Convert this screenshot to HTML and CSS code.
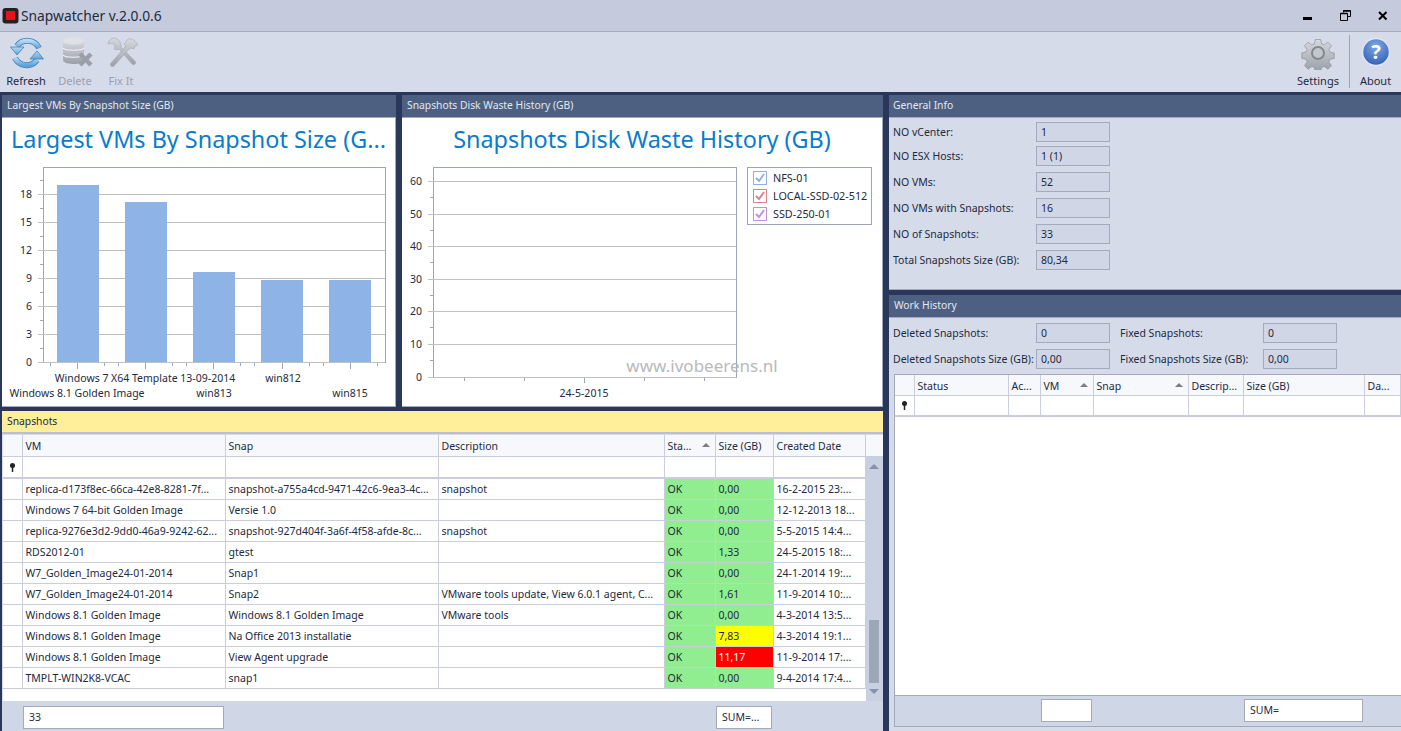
FILE: index.html
```html
<!DOCTYPE html>
<html lang="en">
<head>
    <meta charset="UTF-8">
    <title>Snapwatcher v.2.0.0.6</title>
    <link rel="stylesheet" href="styles.css">
</head>
<body>
    <svg width="0" height="0" class="defs">
        <defs>
            <linearGradient id="blueArrow" x1="0" y1="0" x2="0" y2="1">
                <stop offset="0" stop-color="#b5daf4"/>
                <stop offset="1" stop-color="#5fa3dc"/>
            </linearGradient>
            <linearGradient id="grayMetal" x1="0" y1="0" x2="0" y2="1">
                <stop offset="0" stop-color="#d6d9de"/>
                <stop offset="1" stop-color="#9a9fa8"/>
            </linearGradient>
            <radialGradient id="blueBall" cx="0.5" cy="0.3" r="0.75">
                <stop offset="0" stop-color="#7fa8e4"/>
                <stop offset="1" stop-color="#2c5cb2"/>
            </radialGradient>
        </defs>
    </svg>

    <header class="titlebar">
        <svg class="app-icon" width="18" height="18" viewBox="0 0 18 18">
            <rect x="0.5" y="1" width="16" height="15.5" rx="3" fill="#222"/>
            <rect x="4" y="4" width="9" height="9" fill="#e8101c"/>
        </svg>
        <span class="app-title">Snapwatcher v.2.0.0.6</span>
        <div class="window-buttons">
            <svg width="10" height="10" viewBox="0 0 10 10"><rect x="0" y="6" width="9" height="3" fill="#000"/></svg>
            <svg width="11" height="11" viewBox="0 0 11 11"><path d="M3.5 2.5V.5h7v6H8M.5 3.5h7v7h-7z" fill="none" stroke="#000"/><path d="M.5 3.5h7M3.5 1h7" stroke="#000" stroke-width="1.5"/></svg>
            <svg width="10" height="10" viewBox="0 0 10 10"><path d="M1 1l7.5 7.5M8.5 1L1 8.5" stroke="#000" stroke-width="2"/></svg>
        </div>
    </header>

    <div class="toolbar">
        <div class="tool tool-refresh">
            <svg width="34" height="34" viewBox="0 0 34 34">
                <path d="M29 12A13 13 0 0 0 7 10" fill="none" stroke="#3f7fb8" stroke-width="6"/>
                <path d="M5 22A13 13 0 0 0 27 24" fill="none" stroke="#3f7fb8" stroke-width="6"/>
                <path d="M29 12A13 13 0 0 0 7 10" fill="none" stroke="url(#blueArrow)" stroke-width="4.400"/>
                <path d="M5 22A13 13 0 0 0 27 24" fill="none" stroke="url(#blueArrow)" stroke-width="4.400"/>
                <path d="M.5 11H14L7 19z" fill="url(#blueArrow)" stroke="#3f7fb8" stroke-width=".8"/>
                <path d="M20 23h13.500L27 15z" fill="url(#blueArrow)" stroke="#3f7fb8" stroke-width=".8"/>
            </svg>
            <span>Refresh</span>
        </div>
        <div class="tool tool-delete disabled">
            <svg width="34" height="34" viewBox="0 0 34 34">
                <path d="M2 5v19c0 3 7 4 11 4s10-1 10-4V5z" fill="url(#grayMetal)"/>
                <ellipse cx="12.500" cy="5" rx="10.500" ry="3.500" fill="#dfe1e5"/>
                <path d="M2 12c2 3 19 3 21 0M2 19c2 3 19 3 21 0" fill="none" stroke="#f2f3f5" stroke-width="1.200"/>
                <path d="M19 18l11 11M30 18L19 29" stroke="#9aa0a8" stroke-width="4.500"/>
            </svg>
            <span>Delete</span>
        </div>
        <div class="tool tool-fix disabled">
            <svg width="34" height="34" viewBox="0 0 34 34">
                <path d="M8 2c-3 0-6 3-6 6l5-1 2 3-1 3c2 1 4 1 5 0l13 15c2 2 5-1 3-3L15 11c1-4-3-9-7-9z" fill="url(#grayMetal)" stroke="#a5a9b0" stroke-width=".6"/>
                <path d="M5 27L20 10l-2-2 4-5c4-1 8 2 10 6l-3 1-1 3-3-1-2 1L8 30c-2 2-5-1-3-3z" fill="url(#grayMetal)" stroke="#a5a9b0" stroke-width=".6"/>
            </svg>
            <span>Fix It</span>
        </div>
        <div class="tool tool-settings">
            <svg width="34" height="34" viewBox="0 0 34 34">
                <path d="M14 2h6l1 5 3 1 4-3 4 4-3 4 1.500 3 4.500 1v6l-4.500 1-1.500 3 3 4-4 4-4-3-3 1-1 4.500h-6l-1-4.500-3-1-4 3-4-4 3-4-1.500-3-4.500-1v-6l4.500-1 1.500-3-3-4 4-4 4 3 3-1z" transform="translate(1.700 1.700) scale(.9)" fill="url(#grayMetal)" stroke="#8e939c" stroke-width=".8"/>
                <circle cx="17" cy="17" r="6" fill="#c3c6cc" stroke="#83888f" stroke-width="2"/>
            </svg>
            <span>Settings</span>
        </div>
        <div class="tool tool-about">
            <svg width="30" height="30" viewBox="0 0 30 30">
                <circle cx="15" cy="15" r="13.500" fill="url(#blueBall)" stroke="#dfe6f4" stroke-width="1.500"/>
                <text x="15" y="21.500" text-anchor="middle" class="help-mark">?</text>
            </svg>
            <span>About</span>
        </div>
    </div>

    <main class="main">
        <div class="left">
            <section class="panel chart-panel">
                <h3 class="panel-head">Largest VMs By Snapshot Size (GB)</h3>
                <div class="chart-body">
                    <div class="chart-title">Largest VMs By Snapshot Size (G...</div>
                    <svg class="chart" width="392" height="244" viewBox="2 162 392 244">
                        <rect x="43.500" y="167.500" width="342" height="195" class="frame"/>
                        <path class="grid-line" d="M38 194.500H385M38 222.500H385M38 250.500H385M38 278.500H385M38 306.500H385M38 334.500H385M38 362.500H385"/>
                        <path class="tick" d="M40 180.500h3M40 208.500h3M40 236.500h3M40 264.500h3M40 292.500h3M40 320.500h3M40 348.500h3"/>
                        <path class="tick" d="M50.500 363v3M77.500 363v6M104.500 363v3M118.500 363v3M145.500 363v6M172.500 363v3M186.500 363v3M213.500 363v6M240.500 363v3M254.500 363v3M282.500 363v6M309.500 363v3M323.500 363v3M350.500 363v6M377.500 363v3"/>
                        <rect x="57" y="185" width="42" height="177" class="bar"/>
                        <rect x="125" y="202" width="42" height="160" class="bar"/>
                        <rect x="193" y="272" width="42" height="90" class="bar"/>
                        <rect x="261" y="280" width="42" height="82" class="bar"/>
                        <rect x="329" y="280" width="42" height="82" class="bar"/>
                        <g class="axis-y">
                            <text x="32" y="198">18</text>
                            <text x="32" y="226">15</text>
                            <text x="32" y="254">12</text>
                            <text x="32" y="282">9</text>
                            <text x="32" y="310">6</text>
                            <text x="32" y="338">3</text>
                            <text x="32" y="366">0</text>
                        </g>
                        <g class="axis-x">
                            <text x="145" y="382">Windows 7 X64 Template 13-09-2014</text>
                            <text x="283" y="382">win812</text>
                            <text x="77" y="397">Windows 8.1 Golden Image</text>
                            <text x="214" y="397">win813</text>
                            <text x="350" y="397">win815</text>
                        </g>
                    </svg>
                </div>
            </section>

            <section class="panel chart-panel">
                <h3 class="panel-head">Snapshots Disk Waste History (GB)</h3>
                <div class="chart-body">
                    <div class="chart-title">Snapshots Disk Waste History (GB)</div>
                    <svg class="chart" width="479" height="244" viewBox="402 162 479 244">
                        <rect x="433.500" y="167.500" width="303" height="210" class="frame"/>
                        <path class="grid-line" d="M428 181.500H736M428 214.500H736M428 246.500H736M428 279.500H736M428 311.500H736M428 344.500H736M428 377.500H736"/>
                        <path class="tick" d="M430 197.500h3M430 230.500h3M430 262.500h3M430 295.500h3M430 327.500h3M430 360.500h3"/>
                        <path class="tick" d="M464.500 378v3M524.500 378v3M584.500 378v5M644.500 378v3M704.500 378v3"/>
                        <g class="axis-y">
                            <text x="422" y="185">60</text>
                            <text x="422" y="218">50</text>
                            <text x="422" y="250">40</text>
                            <text x="422" y="283">30</text>
                            <text x="422" y="315">20</text>
                            <text x="422" y="348">10</text>
                            <text x="422" y="381">0</text>
                        </g>
                        <g class="axis-x">
                            <text x="584" y="397">24-5-2015</text>
                        </g>
                        <text x="702" y="372" class="watermark">www.ivobeerens.nl</text>
                        <rect x="747.500" y="167.500" width="124" height="57" class="legend-box"/>
                        <rect x="753.500" y="171.500" width="13" height="13" class="check" stroke="#8fb2e6"/>
                        <path d="M756 178l3 3 5-7" class="check-mark" stroke="#8fb2e6"/>
                        <text x="773" y="182" class="legend-text">NFS-01</text>
                        <rect x="753.500" y="189.500" width="13" height="13" class="check" stroke="#e0828c"/>
                        <path d="M756 196l3 3 5-7" class="check-mark" stroke="#e0828c"/>
                        <text x="773" y="200" class="legend-text">LOCAL-SSD-02-512</text>
                        <rect x="753.500" y="207.500" width="13" height="13" class="check" stroke="#c490d8"/>
                        <path d="M756 214l3 3 5-7" class="check-mark" stroke="#c490d8"/>
                        <text x="773" y="218" class="legend-text">SSD-250-01</text>
                    </svg>
                </div>
            </section>

            <section class="panel snapshots">
                <h3 class="panel-head yellow">Snapshots</h3>
                <div class="grid-wrap">
                    <table class="data-grid snap-grid">
                        <colgroup>
                            <col class="c-ind"><col class="c-vm"><col class="c-snap"><col class="c-desc">
                            <col class="c-status"><col class="c-size"><col class="c-date">
                        </colgroup>
                        <thead>
                            <tr>
                                <th></th><th>VM</th><th>Snap</th><th>Description</th>
                                <th class="sorted">Sta...</th><th>Size (GB)</th><th>Created Date</th>
                            </tr>
                            <tr class="filter-row">
                                <td class="pin"><svg width="7" height="9" viewBox="0 0 7 9"><path d="M3.500 4V9" stroke="#222" stroke-width="1.500"/><circle cx="3.500" cy="2.500" r="2.500" fill="#222"/></svg></td><td></td><td></td><td></td><td></td><td></td><td></td>
                            </tr>
                        </thead>
                        <tbody>
                            <tr><td class="ind"></td><td>replica-d173f8ec-66ca-42e8-8281-7f...</td><td>snapshot-a755a4cd-9471-42c6-9ea3-4c...</td><td>snapshot</td><td class="ok">OK</td><td class="ok">0,00</td><td>16-2-2015 23:...</td></tr>
                            <tr><td class="ind"></td><td>Windows 7 64-bit Golden Image</td><td>Versie 1.0</td><td></td><td class="ok">OK</td><td class="ok">0,00</td><td>12-12-2013 18...</td></tr>
                            <tr><td class="ind"></td><td>replica-9276e3d2-9dd0-46a9-9242-62...</td><td>snapshot-927d404f-3a6f-4f58-afde-8c...</td><td>snapshot</td><td class="ok">OK</td><td class="ok">0,00</td><td>5-5-2015 14:4...</td></tr>
                            <tr><td class="ind"></td><td>RDS2012-01</td><td>gtest</td><td></td><td class="ok">OK</td><td class="ok">1,33</td><td>24-5-2015 18:...</td></tr>
                            <tr><td class="ind"></td><td>W7_Golden_Image24-01-2014</td><td>Snap1</td><td></td><td class="ok">OK</td><td class="ok">0,00</td><td>24-1-2014 19:...</td></tr>
                            <tr><td class="ind"></td><td>W7_Golden_Image24-01-2014</td><td>Snap2</td><td>VMware tools update, View 6.0.1 agent, C...</td><td class="ok">OK</td><td class="ok">1,61</td><td>11-9-2014 10:...</td></tr>
                            <tr><td class="ind"></td><td>Windows 8.1 Golden Image</td><td>Windows 8.1 Golden Image</td><td>VMware tools</td><td class="ok">OK</td><td class="ok">0,00</td><td>4-3-2014 13:5...</td></tr>
                            <tr><td class="ind"></td><td>Windows 8.1 Golden Image</td><td>Na Office 2013 installatie</td><td></td><td class="ok">OK</td><td class="warn">7,83</td><td>4-3-2014 19:1...</td></tr>
                            <tr><td class="ind"></td><td>Windows 8.1 Golden Image</td><td>View Agent upgrade</td><td></td><td class="ok">OK</td><td class="bad">11,17</td><td>11-9-2014 17:...</td></tr>
                            <tr><td class="ind"></td><td>TMPLT-WIN2K8-VCAC</td><td>snap1</td><td></td><td class="ok">OK</td><td class="ok">0,00</td><td>9-4-2014 17:4...</td></tr>
                        </tbody>
                    </table>
                    <div class="scroll-col">
                        <div class="scroll-head"></div>
                        <div class="scrollbar">
                            <span class="arrow-up"></span>
                            <span class="scroll-space"></span>
                            <span class="thumb"></span>
                            <span class="arrow-down"></span>
                        </div>
                    </div>
                </div>
                <div class="grid-foot snap-foot">
                    <div class="foot-box foot-count">33</div>
                    <div class="foot-box foot-sum">SUM=...</div>
                </div>
            </section>
        </div>

        <div class="right">
            <section class="panel general">
                <h3 class="panel-head">General Info</h3>
                <div class="info-body">
                    <div class="info-row"><label>NO vCenter:</label><div class="value">1</div></div>
                    <div class="info-row"><label>NO ESX Hosts:</label><div class="value">1 (1)</div></div>
                    <div class="info-row"><label>NO VMs:</label><div class="value">52</div></div>
                    <div class="info-row"><label>NO VMs with Snapshots:</label><div class="value">16</div></div>
                    <div class="info-row"><label>NO of Snapshots:</label><div class="value">33</div></div>
                    <div class="info-row"><label>Total Snapshots Size (GB):</label><div class="value">80,34</div></div>
                </div>
            </section>

            <section class="panel history">
                <h3 class="panel-head">Work History</h3>
                <div class="info-body two-col">
                    <div class="info-row"><label>Deleted Snapshots:</label><div class="value">0</div><label>Fixed Snapshots:</label><div class="value">0</div></div>
                    <div class="info-row"><label>Deleted Snapshots Size (GB):</label><div class="value">0,00</div><label>Fixed Snapshots Size (GB):</label><div class="value">0,00</div></div>
                </div>
                <div class="history-grid">
                    <table class="data-grid work-grid">
                        <colgroup>
                            <col class="w-ind"><col class="w-status"><col class="w-ac"><col class="w-vm">
                            <col class="w-snap"><col class="w-desc"><col class="w-size"><col class="w-da">
                        </colgroup>
                        <thead>
                            <tr>
                                <th></th><th>Status</th><th>Ac...</th><th class="sorted">VM</th>
                                <th class="sorted">Snap</th><th>Descrip...</th><th>Size (GB)</th><th>Da...</th>
                            </tr>
                            <tr class="filter-row">
                                <td class="pin"><svg width="7" height="9" viewBox="0 0 7 9"><path d="M3.500 4V9" stroke="#222" stroke-width="1.500"/><circle cx="3.500" cy="2.500" r="2.500" fill="#222"/></svg></td><td></td><td></td><td></td><td></td><td></td><td></td><td></td>
                            </tr>
                        </thead>
                    </table>
                    <div class="grid-foot work-foot">
                        <div class="foot-box foot-empty"></div>
                        <div class="foot-box foot-wsum">SUM=</div>
                    </div>
                </div>
            </section>
        </div>
    </main>
</body>
</html>
```

FILE: styles.css
```css
* {
    box-sizing: border-box;
}
html, body {
    height: 100%;
}
body {
    margin: 0;
    display: flex;
    flex-direction: column;
    height: 731px;
    overflow: hidden;
    font-family: "Noto Sans", Arial, sans-serif;
    font-size: 10.5px;
    color: #1e2a3e;
    background: #28375a;
}
.defs {
    position: absolute;
}

/* window chrome */
.titlebar {
    height: 32px;
    flex: none;
    display: flex;
    align-items: center;
    padding-left: 2px;
    background: #c5cbdd;
    border-bottom: 1px solid #a3aabb;
}
.app-icon {
    margin-right: 1px;
}
.app-title {
    font-size: 13.8px;
    color: #1e2a3e;
}
.window-buttons {
    margin-left: auto;
    display: flex;
    align-items: center;
    gap: 27px;
    padding-right: 13px;
}
.toolbar {
    height: 60px;
    flex: none;
    display: flex;
    background: #d5dbe9;
}
.tool {
    display: flex;
    flex-direction: column;
    align-items: center;
    padding-top: 4px;
    font-size: 11px;
    color: #1e2a3e;
}
.tool svg {
    height: 34px;
}
.tool span {
    margin-top: 3px;
}
.tool.disabled {
    color: #9aa1ae;
}
.tool-refresh {
    width: 50px;
    margin-left: 1px;
}
.tool-refresh svg {
    margin-left: 1px;
}
.tool-delete {
    width: 48px;
}
.tool-delete svg {
    margin-left: 5px;
}
.tool-fix {
    width: 44px;
}
.tool-fix svg {
    margin-left: 3px;
}
.tool-settings {
    width: 60px;
    margin-left: auto;
    padding-right: 2px;
}
.tool-about {
    width: 52px;
    margin: 3px 0 4px;
    padding-top: 2px;
    border-left: 1px solid #9ea6b6;
}
.tool-about span {
    margin-top: 6px;
}
.help-mark {
    font: bold 20px "Noto Sans", Arial, sans-serif;
    fill: #fff;
}

/* layout */
.main {
    flex: 1;
    min-height: 0;
    display: flex;
    gap: 6px;
    padding: 3px 0 0 2px;
}
.left {
    width: 881px;
    flex: none;
    display: grid;
    grid-template-columns: 394px 481px;
    grid-template-rows: 311px 320px;
    gap: 5px 6px;
}
.snapshots {
    grid-column: 1 / 3;
}
.right {
    flex: 1;
    display: flex;
    flex-direction: column;
    gap: 5px;
}
.panel {
    display: flex;
    flex-direction: column;
    min-height: 0;
    background: #d5dbe9;
}
.panel-head {
    margin: 0;
    height: 23px;
    flex: none;
    padding: 3px 0 0 5px;
    font-size: 10.3px;
    font-weight: normal;
    color: #e3e7f0;
    background: #4d6082;
    border-bottom: 1px solid #a3aabb;
}
.general .panel-head {
    padding-left: 4px;
}
.panel-head.yellow {
    height: 23px;
    padding-left: 5px;
    color: #1e2a3e;
    background: #ffee9a;
    border-bottom: 2px solid #b9bfcf;
}

/* charts */
.chart-body {
    flex: 1;
    display: flex;
    flex-direction: column;
    background: #fff;
    border-right: 1px solid #a3aabb;
    border-bottom: 1px solid #a3aabb;
}
.chart-title {
    height: 44px;
    flex: none;
    padding-top: 5px;
    text-align: center;
    font-size: 23.4px;
    color: #0a7ccb;
    white-space: nowrap;
    overflow: hidden;
}
.frame {
    fill: #fff;
    stroke: #9ca6b4;
}
.grid-line {
    fill: none;
    stroke: #c0c0c0;
}
.tick {
    fill: none;
    stroke: #9ca6b4;
}
.bar {
    fill: #8eb3e6;
}
.axis-y text {
    text-anchor: end;
    font-size: 10.5px;
    fill: #1e2a3e;
}
.axis-x text {
    text-anchor: middle;
    font-size: 10.5px;
    fill: #1e2a3e;
}
.watermark {
    text-anchor: middle;
    font-size: 17px;
    fill: #b9b9b9;
}
.legend-box {
    fill: #fff;
    stroke: #9ca6b4;
}
.legend-text {
    font-size: 10.8px;
    fill: #1e2a3e;
}
.check {
    fill: #fff;
}
.check-mark {
    fill: none;
    stroke-width: 2;
}

/* grids */
.grid-wrap {
    height: 266px;
    flex: none;
    display: flex;
    align-items: stretch;
    margin: 1px 0 0 1px;
    background: #fff;
}
.data-grid {
    table-layout: fixed;
    border-collapse: collapse;
    align-self: flex-start;
    background: #fff;
}
.data-grid th,
.data-grid td {
    height: 21px;
    padding: 0 0 0 3px;
    font-weight: normal;
    text-align: left;
    white-space: nowrap;
    overflow: hidden;
    border: 1px solid #c9cddc;
    border-top: none;
    border-left: none;
}
.data-grid th {
    padding-top: 2px;
    background: #f6f8fc;
}
.data-grid th.sorted {
    position: relative;
}
.data-grid th.sorted::after {
    content: "";
    position: absolute;
    right: 5px;
    top: 8px;
    border-left: 4px solid transparent;
    border-right: 4px solid transparent;
    border-bottom: 4px solid #7d7d7d;
}
.filter-row td {
    height: 22px;
    border-bottom-width: 2px;
}
.data-grid .pin {
    padding: 2px 0 0;
    text-align: center;
}
.ind {
    background: #fff;
}
.data-grid .ok {
    background: #90ee90;
}
.data-grid .warn {
    background: #ffff00;
}
.data-grid .bad {
    color: #fff;
    background: #ff0000;
}
.snap-grid {
    width: 862px;
}
.c-ind { width: 19px; }
.c-vm { width: 203px; }
.c-snap { width: 213px; }
.c-desc { width: 226px; }
.c-status { width: 51px; }
.c-size { width: 58px; }
.c-date { width: 92px; }
.scroll-col {
    width: 17px;
    flex: none;
    display: flex;
    flex-direction: column;
}
.scroll-head {
    height: 22px;
    background: #f6f8fc;
    border-bottom: 1px solid #c9cddc;
}
.scrollbar {
    flex: 1;
    display: flex;
    flex-direction: column;
    align-items: center;
    padding: 7px 0 7px;
    background: #c9d0e1;
}
.scroll-space {
    flex: 1;
}
.thumb {
    width: 10px;
    height: 63px;
    margin-bottom: 6px;
    background: #9ca7b8;
}
.arrow-up {
    border-left: 5px solid transparent;
    border-right: 5px solid transparent;
    border-bottom: 5px solid #8692a8;
}
.arrow-down {
    border-left: 5px solid transparent;
    border-right: 5px solid transparent;
    border-top: 5px solid #8692a8;
}
.grid-foot {
    display: flex;
    flex: none;
    background: #cfd6e6;
}
.snap-foot {
    flex: 1;
    padding: 5px 0 0 21px;
}
.foot-box {
    height: 23px;
    padding: 3px 0 0 5px;
    background: #fff;
    border: 1px solid #a3aabb;
}
.foot-count {
    width: 201px;
}
.foot-sum {
    width: 56px;
    margin-left: 492px;
}

/* info panels */
.general {
    height: 195px;
    flex: none;
}
.history {
    flex: 1;
}
.info-body {
    display: flex;
    flex-direction: column;
    gap: 6px;
    padding: 4px 0 0 4px;
}
.general .info-body {
    flex: 1;
    border-bottom: 1px solid #a3aabb;
}
.general .info-row:first-child {
    margin-bottom: -2px;
}
.info-row {
    display: flex;
    align-items: center;
}
.info-row label {
    width: 143px;
    flex: none;
}
.value {
    width: 74px;
    height: 20px;
    padding: 2px 0 0 4px;
    border: 1px solid #a3aabb;
    background: #d0d6e5;
}
.two-col .value {
    margin-right: 10px;
}
.two-col {
    padding-top: 5px;
}
.history-grid {
    flex: 1;
    min-height: 0;
    display: flex;
    flex-direction: column;
    margin: 5px 2px 4px 5px;
    background: #fff;
    border: 1px solid #a3aabb;
}
.work-grid {
    width: 100%;
}
.w-ind { width: 19px; }
.w-status { width: 94px; }
.w-ac { width: 32px; }
.w-vm { width: 53px; }
.w-snap { width: 95px; }
.w-desc { width: 55px; }
.w-size { width: 121px; }
.w-da { width: 36px; }
.work-grid th {
    height: 20px;
}
.work-grid .filter-row td {
    height: 21px;
}
.work-foot {
    margin-top: auto;
    height: 31px;
    padding: 3px 0 0 146px;
    border-top: 1px solid #a3aabb;
}
.foot-empty {
    width: 51px;
}
.foot-wsum {
    width: 119px;
    margin-left: 152px;
}
```
